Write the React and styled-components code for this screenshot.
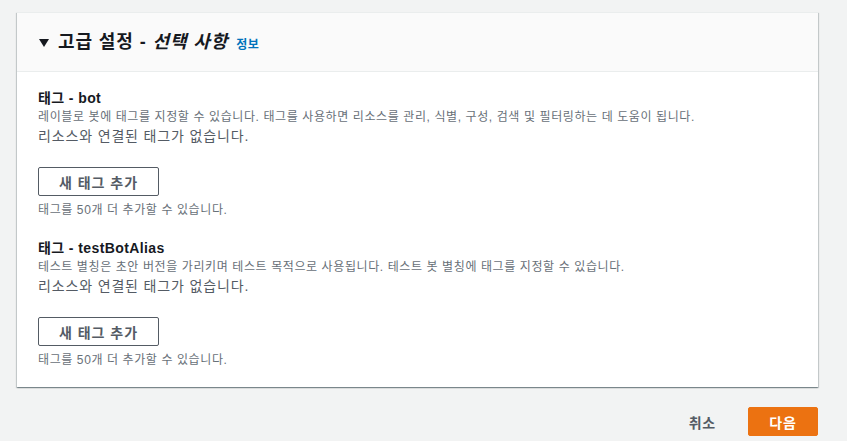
import React from "react";
import styled, { createGlobalStyle } from "styled-components";

const Global = createGlobalStyle`
  html, body { margin: 0; padding: 0; background: #f2f3f3; }
  body { font-family: "Liberation Sans", "Noto Sans CJK KR", sans-serif; color: #16191f; }
`;

const Page = styled.div`
  padding: 12px 29px 0 17px;
  min-height: 441px;
  box-sizing: border-box;
`;

const Card = styled.section`
  background: #fff;
  box-shadow: 0 1px 1px 0 rgba(0, 28, 36, 0.3), 1px 1px 1px 0 rgba(0, 28, 36, 0.15),
    -1px 1px 1px 0 rgba(0, 28, 36, 0.15);
  border-top: 1px solid #eaeded;
`;

const Header = styled.div`
  display: flex;
  align-items: center;
  height: 58px;
  padding-left: 22px;
  background: #fafafa;
  border-bottom: 1px solid #eaeded;
`;

const Caret = styled.svg`
  width: 10px;
  height: 8px;
  margin-right: 9px;
  margin-top: 1px;
`;

const Title = styled.h2`
  margin: 0;
  font-size: 18px;
  font-weight: 700;
  line-height: 22px;
  letter-spacing: 0.9px;
  color: #16191f;
  em { font-style: italic; }
`;

const Info = styled.a`
  margin-left: 8px;
  margin-top: 3px;
  font-size: 12px;
  font-weight: 700;
  letter-spacing: 0.6px;
  color: #0073bb;
  text-decoration: none;
`;

const Body = styled.div`
  padding: 16px 20px 19px 21px;
  display: flex;
  flex-direction: column;
  gap: 20px;
`;

const Section = styled.div`
  display: flex;
  flex-direction: column;
`;

const Label = styled.div`
  font-size: 14px;
  font-weight: 700;
  line-height: 20px;
  letter-spacing: 0.4px;
  color: #16191f;
`;

const Desc = styled.div`
  font-size: 12px;
  line-height: 18px;
  letter-spacing: 0.6px;
  color: #687078;
`;

const Empty = styled.div`
  font-size: 14px;
  line-height: 20px;
  letter-spacing: 0.85px;
  color: #545b64;
`;

const AddButton = styled.button`
  align-self: flex-start;
  margin-top: 21px;
  width: 121px;
  height: 29px;
  background: #fff;
  border: 1px solid #545b64;
  border-radius: 2px;
  font-family: inherit;
  font-size: 14px;
  font-weight: 700;
  letter-spacing: 1px;
  color: #545b64;
  padding: 0;
  cursor: pointer;
`;

const Limit = styled.div`
  margin-top: 6px;
  font-size: 12px;
  line-height: 16px;
  letter-spacing: 0.6px;
  color: #687078;
`;

const Footer = styled.div`
  display: flex;
  justify-content: flex-end;
  align-items: center;
  gap: 30px;
  margin-top: 20px;
`;

const LinkButton = styled.button`
  background: none;
  border: none;
  padding: 0 2px;
  font-family: inherit;
  font-size: 14px;
  font-weight: 700;
  letter-spacing: 0.8px;
  color: #545b64;
  cursor: pointer;
`;

const PrimaryButton = styled.button`
  width: 70px;
  height: 29px;
  background: #ec7211;
  border: 1px solid #ec7211;
  border-radius: 2px;
  font-family: inherit;
  font-size: 14px;
  font-weight: 700;
  letter-spacing: 0.8px;
  color: #fff;
  padding: 0;
  cursor: pointer;
`;

const TagSection = ({ name, desc }) => (
  <Section>
    <Label>태그 - {name}</Label>
    <Desc>{desc}</Desc>
    <Empty>리소스와 연결된 태그가 없습니다.</Empty>
    <AddButton>새 태그 추가</AddButton>
    <Limit>태그를 50개 더 추가할 수 있습니다.</Limit>
  </Section>
);

export default function App() {
  return (
    <>
      <Global />
      <Page>
        <Card>
          <Header>
            <Caret viewBox="0 0 10 8">
              <path d="M0 0 H10 L5 8 Z" fill="#16191f" />
            </Caret>
            <Title>
              고급 설정 - <em>선택 사항</em>
            </Title>
            <Info href="#">정보</Info>
          </Header>
          <Body>
            <TagSection
              name="bot"
              desc="레이블로 봇에 태그를 지정할 수 있습니다. 태그를 사용하면 리소스를 관리, 식별, 구성, 검색 및 필터링하는 데 도움이 됩니다."
            />
            <TagSection
              name="testBotAlias"
              desc="테스트 별칭은 초안 버전을 가리키며 테스트 목적으로 사용됩니다. 테스트 봇 별칭에 태그를 지정할 수 있습니다."
            />
          </Body>
        </Card>
        <Footer>
          <LinkButton>취소</LinkButton>
          <PrimaryButton>다음</PrimaryButton>
        </Footer>
      </Page>
    </>
  );
}
